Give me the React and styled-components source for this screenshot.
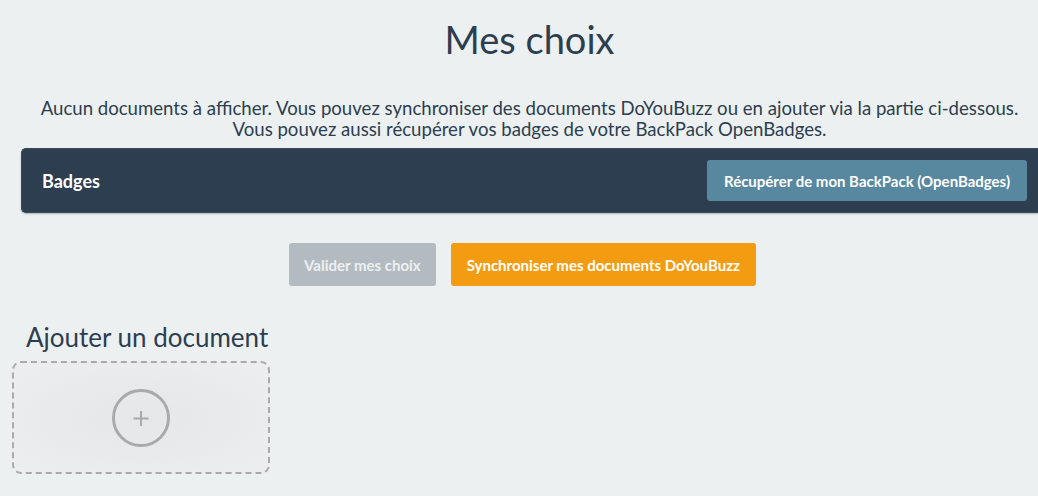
import React from "react";
import styled, { createGlobalStyle } from "styled-components";

const Global = createGlobalStyle`
  html, body { margin: 0; padding: 0; background: #ecf0f1; }
  body { font-family: Lato, "Open Sans", sans-serif; color: #2c3e50; }
  * { box-sizing: border-box; }
`;

const Page = styled.div`
  width: 1038px;
  height: 496px;
  overflow: hidden;
  display: flex;
  flex-direction: column;
`;

const Title = styled.h1`
  margin: 16px 0 0 21px;
  text-align: center;
  font-size: 38px;
  font-weight: 400;
  line-height: 46px;
  color: #2c3e50;
`;

const Intro = styled.p`
  margin: 36px 0 0 21px;
  text-align: center;
  font-size: 18.6px;
  line-height: 21px;
  color: #2c3e50;
`;

const Panel = styled.div`
  margin: 8px 0 0 21px;
  height: 65px;
  background: #2c3e50;
  border: 1px solid #3d4a57;
  border-right: 0;
  border-radius: 5px 0 0 5px;
  box-shadow: 0 1px 2px rgba(0, 0, 0, 0.25);
  display: flex;
  align-items: center;
  justify-content: space-between;
  padding: 0 11px 0 20px;
`;

const PanelTitle = styled.span`
  color: #fff;
  font-weight: 700;
  font-size: 18px;
`;

const Button = styled.button`
  font-family: Lato, "Open Sans", sans-serif;
  font-weight: 700;
  font-size: 15px;
  color: ${(p) => p.$fg || "#fff"};
  background: ${(p) => p.$bg};
  border: 0;
  border-radius: 3px;
  height: ${(p) => p.$h || 43}px;
  padding: 0 ${(p) => p.$px || 16}px;
  cursor: pointer;
`;

const Actions = styled.div`
  margin-top: 30px;
  display: flex;
  justify-content: center;
  gap: 15px;
  padding-left: 7px;
`;

const Section = styled.div`
  margin: 36px 0 0 12px;
  display: flex;
  flex-direction: column;
`;

const SectionTitle = styled.h2`
  margin: 0 0 0 14px;
  font-size: 26px;
  font-weight: 400;
  line-height: 30px;
  color: #2c3e50;
`;

const DropZone = styled.div`
  margin-top: 9px;
  width: 258px;
  height: 113px;
  border: 2px dashed #aaaaaa;
  border-radius: 9px;
  background: radial-gradient(ellipse at center, #e6e7e8 0%, #e9eaeb 50%, #eceeef 100%);
  display: flex;
  align-items: center;
  justify-content: center;
`;

const PlusIcon = () => (
  <svg width="60" height="60" viewBox="0 0 60 60">
    <circle cx="30" cy="30" r="27.5" fill="none" stroke="#aaaaaa" strokeWidth="3" />
    <path d="M30 23v15M22.5 30.5h15" stroke="#aaaaaa" strokeWidth="2" />
  </svg>
);

export default function App() {
  return (
    <Page>
      <Global />
      <Title>Mes choix</Title>
      <Intro>
        Aucun documents à afficher. Vous pouvez synchroniser des documents DoYouBuzz ou en ajouter via la partie ci-dessous.
        <br />
        Vous pouvez aussi récupérer vos badges de votre BackPack OpenBadges.
      </Intro>
      <Panel>
        <PanelTitle>Badges</PanelTitle>
        <Button $bg="#57889f" $h={41} $px={17}>Récupérer de mon BackPack (OpenBadges)</Button>
      </Panel>
      <Actions>
        <Button $bg="#b4bbc0" $fg="#ecf0f1" $px={15}>Valider mes choix</Button>
        <Button $bg="#f39c12" $px={16}>Synchroniser mes documents DoYouBuzz</Button>
      </Actions>
      <Section>
        <SectionTitle>Ajouter un document</SectionTitle>
        <DropZone>
          <PlusIcon />
        </DropZone>
      </Section>
    </Page>
  );
}
